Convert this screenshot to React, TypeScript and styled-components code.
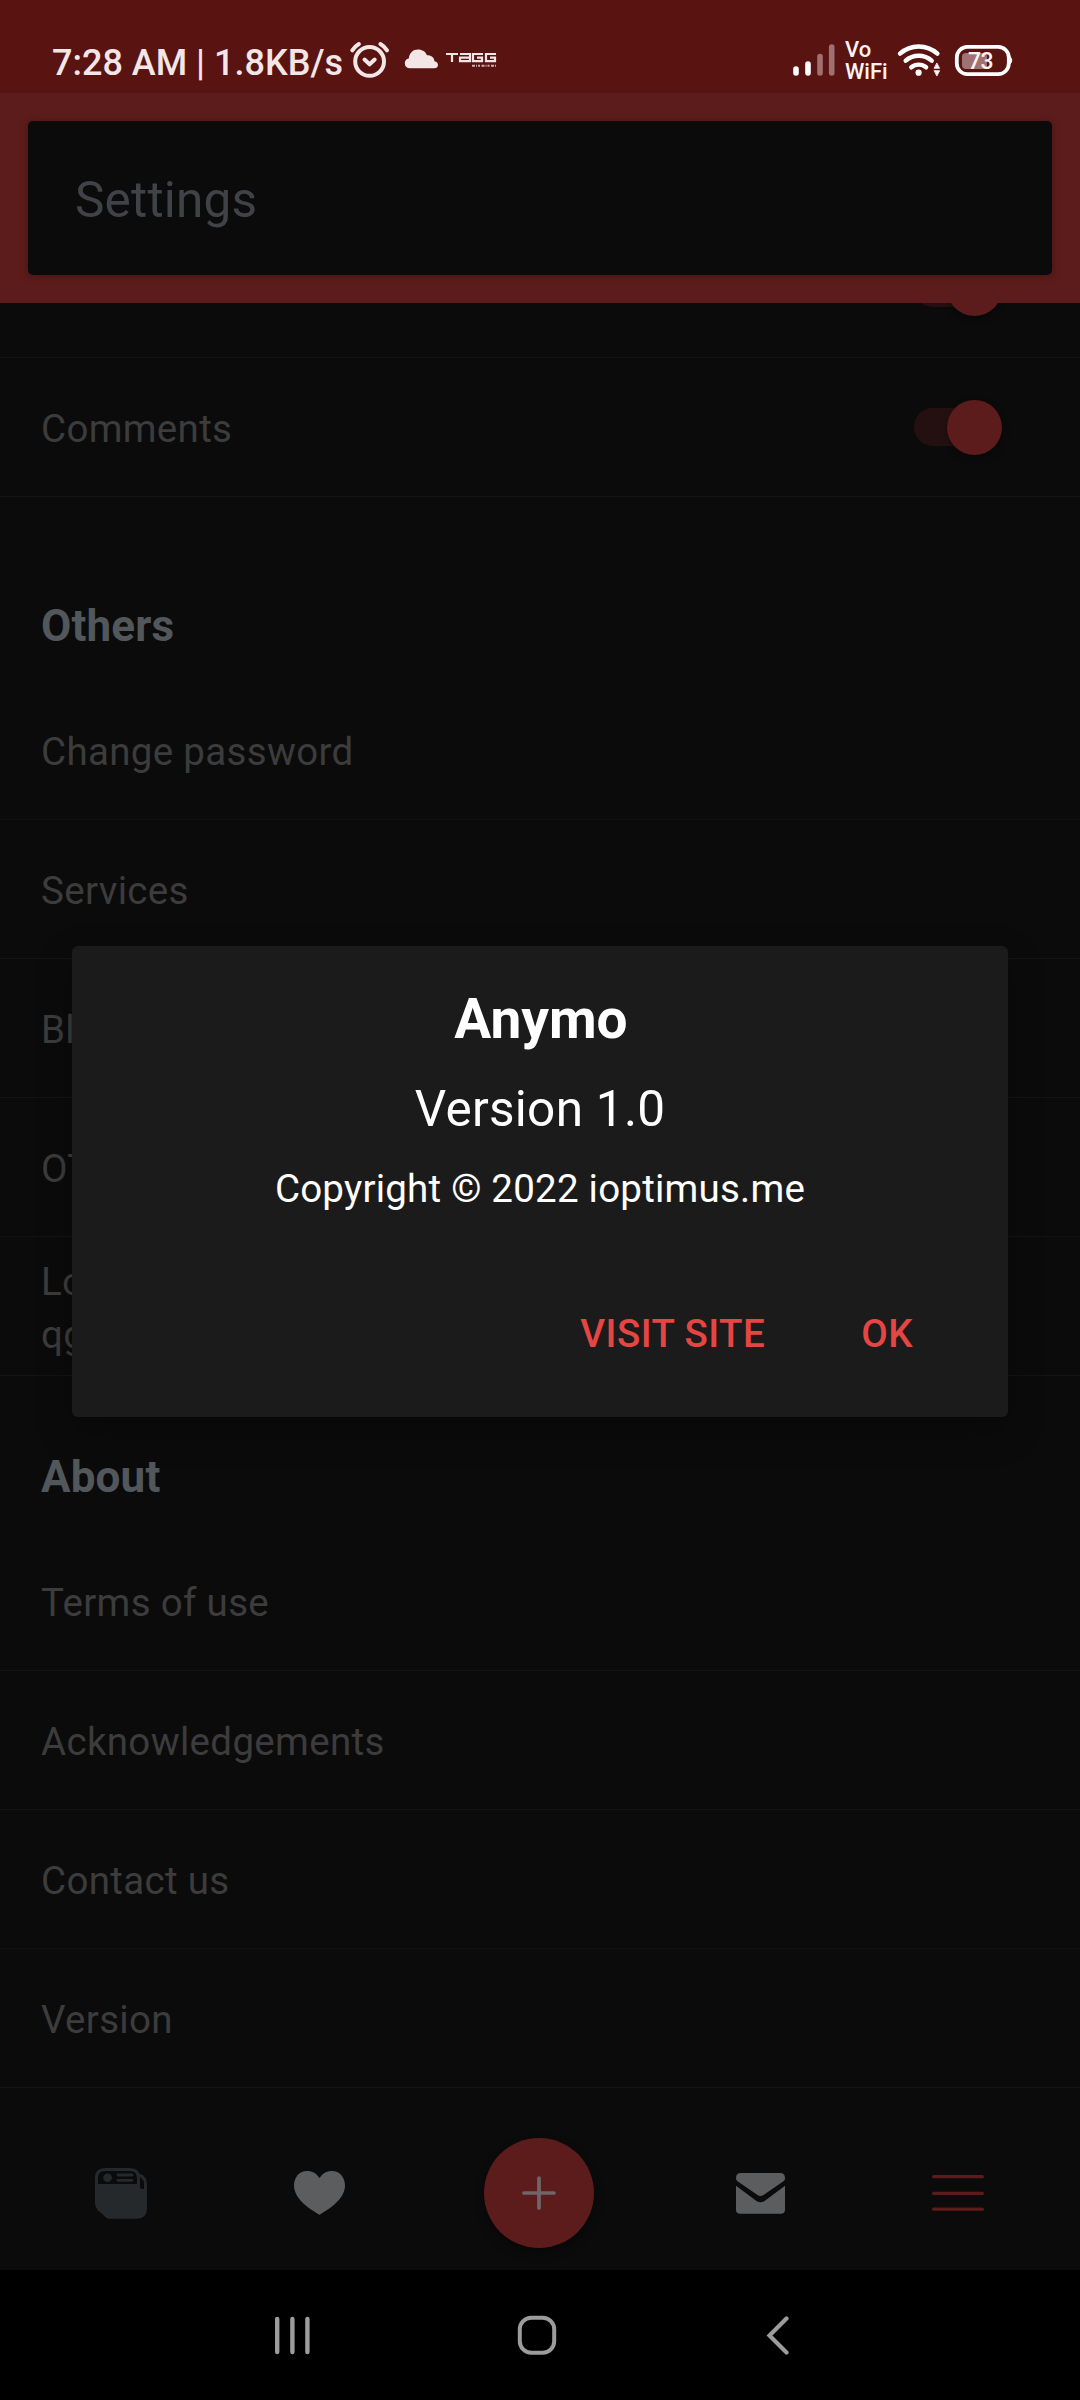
import React from 'react';
import styled, { createGlobalStyle } from 'styled-components';

const GlobalStyle = createGlobalStyle`
  *, *::before, *::after { box-sizing: border-box; }
  body { margin: 0; background: #000; }
  button { font: inherit; border: 0; padding: 0; background: none; }
  svg { display: block; flex-shrink: 0; }
`;

const Screen = styled.div`
  position: relative;
  display: flex;
  flex-direction: column;
  width: 1080px;
  height: 2400px;
  overflow: hidden;
  background: #0b0b0b;
  font-family: Roboto, 'Liberation Sans', sans-serif;
`;

const StatusBar = styled.header`
  display: flex;
  align-items: flex-start;
  justify-content: space-between;
  height: 93px;
  padding: 40px 66px 0 52px;
  background: #591311;
  color: #f2e6e6;
`;

const StatusGroup = styled.div`
  display: flex;
  align-items: flex-start;
`;

const Clock = styled.span`
  width: 297px;
  padding-top: 2px;
  font-size: 36px;
  font-weight: 500;
  line-height: 42px;
  white-space: nowrap;
`;

const AppBar = styled.div`
  height: 210px;
  flex-shrink: 0;
  padding: 28px;
  background: #5c1c1b;
`;

const TitleCard = styled.div`
  display: flex;
  align-items: center;
  height: 154px;
  padding: 4px 47px 0;
  border-radius: 5px;
  background: #0b0b0b;
  box-shadow: 0 1px 7px rgba(20, 8, 8, 0.35);
  color: #3f4246;
  font-size: 49.5px;
  letter-spacing: 0.2px;
`;

const List = styled.main`
  display: flex;
  flex: 1;
  flex-direction: column;
  justify-content: flex-end;
  min-height: 0;
  overflow: hidden;
`;

const Row = styled.div`
  display: flex;
  align-items: center;
  justify-content: space-between;
  height: 139px;
  flex-shrink: 0;
  padding: 3px 78px 0 41px;
  border-bottom: 1px solid #131414;
  color: #3c3c3c;
  font-size: 38.5px;
  line-height: 53px;
  letter-spacing: 0.33px;
  white-space: pre-line;
`;

const SectionTitle = styled.h2<{ $gap?: number }>`
  display: flex;
  align-items: flex-end;
  height: 156px;
  flex-shrink: 0;
  margin: ${(p) => p.$gap ?? 0}px 0 0;
  padding: 0 41px 29px;
  color: #52575b;
  font-size: 44px;
  font-weight: 700;
  line-height: 52px;
  letter-spacing: 0.15px;
`;

const Track = styled.span`
  display: flex;
  align-items: center;
  justify-content: flex-end;
  width: 88px;
  height: 38px;
  margin: -3px 0 0 auto;
  border-radius: 19px;
  background: linear-gradient(90deg, #251011 60px, transparent 60px);
`;

const Thumb = styled.span`
  width: 55px;
  height: 55px;
  flex-shrink: 0;
  border-radius: 50%;
  background: #5c1c1b;
  box-shadow: 0 3px 7px rgba(0, 0, 0, 0.4);
`;

const TabBar = styled.nav`
  display: flex;
  align-items: center;
  gap: 147px;
  height: 182px;
  flex-shrink: 0;
  padding: 28px 95px 0;
`;

const AddButton = styled.button`
  display: grid;
  place-items: center;
  width: 110px;
  height: 110px;
  flex-shrink: 0;
  margin: 0 -5px 0 -8px;
  border-radius: 50%;
  background: #5c1c1b;
  box-shadow: 0 5px 10px rgba(0, 0, 0, 0.35);
`;

const SystemNav = styled.footer`
  display: flex;
  align-items: center;
  justify-content: space-between;
  height: 130px;
  flex-shrink: 0;
  padding: 0 290px 1px 274px;
  background: #000;
`;

const HomeSlot = styled.span`
  margin-right: 4px;
`;

const Overlay = styled.div`
  position: absolute;
  inset: 93px 0 130px;
  display: flex;
  align-items: center;
  justify-content: center;
`;

const Dialog = styled.section`
  display: flex;
  flex-direction: column;
  width: 936px;
  height: 471px;
  padding: 41px 95px 0;
  border-radius: 6px;
  background: #1b1b1b;
  box-shadow: 0 14px 36px rgba(0, 0, 0, 0.28);
  color: #fff;
  text-align: center;
`;

const DialogTitle = styled.h1`
  margin: 0;
  padding-left: 2px;
  font-size: 55px;
  font-weight: 700;
  line-height: 64px;
`;

const DialogVersion = styled.p`
  margin: 29px 0 0;
  font-size: 49.5px;
  line-height: 58px;
  letter-spacing: 0.28px;
`;

const DialogNote = styled.p`
  margin: 28px 0 0;
  font-size: 38.5px;
  line-height: 46px;
  letter-spacing: 0.22px;
`;

const DialogActions = styled.div`
  display: flex;
  justify-content: flex-end;
  gap: 96px;
  margin-top: 99px;
`;

const ActionButton = styled.button`
  color: #e54643;
  font-size: 38.5px;
  font-weight: 500;
  line-height: 46px;
  letter-spacing: 0.45px;
`;

const AlarmIcon = () => (
  <svg width="42" height="40" viewBox="349 40 42 40" fill="none" stroke="#f2e6e6" strokeWidth="4" strokeLinecap="round" strokeLinejoin="round">
    <circle cx="369.6" cy="61.4" r="14.4" />
    <path d="M364.5 59.5l5.1 4.8 5.1-4.8M352.3 50.3q2.5-3.8 6.6-6.2M387 50.3q-2.5-3.8-6.6-6.2" />
  </svg>
);

const CloudIcon = () => (
  <svg width="54" height="40" viewBox="391 40 54 40" fill="#f2e6e6">
    <path d="M409.3 68.2a4.9 4.9 0 0 1-.5-9.7C409.3 53 413 49.6 418 49.6c4.300 0 7.600 2.200 8.900 5.700 4.500-.2 7.300 2.300 7.600 5.900 2.200.5 3.500 1.900 3.500 3.700 0 2-1.500 3.300-3.700 3.300z" />
  </svg>
);

const TaggLogo = () => (
  <svg width="54" height="40" viewBox="445 40 54 40" fill="none" stroke="#f2e6e6">
    <g strokeWidth="2.2">
      <path d="M446 54h12M452 54v8" />
      <path d="M460 54h10v7.200h-10v-3.600h9" />
      <path d="M483 54h-10v7.200h9v-3.600h-5" />
      <path d="M496 54h-10v7.200h9v-3.600h-5" />
    </g>
    <path d="M472 65.800h24" strokeWidth="2" strokeDasharray="3 1 1 1 2 1.500" opacity="0.75" />
  </svg>
);

const SignalIcon = () => (
  <svg width="50" height="40" viewBox="792 40 50 40" stroke="#fff" strokeWidth="5.6" strokeLinecap="round">
    <path d="M796 69v4M808 64v9" />
    <path d="M820 56.500v16.500M831.700 47v26" stroke="#9f7171" />
  </svg>
);

const VoWifi = styled.span`
  display: flex;
  flex-direction: column;
  width: 54px;
  margin-top: -1px;
  padding-left: 3px;
  font-size: 22px;
  font-weight: 500;
  line-height: 22px;
  color: #fbf3f3;
`;

const WifiIcon = () => (
  <svg width="57" height="40" viewBox="896 40 57 40" fill="none" stroke="#fff" strokeWidth="4.4" strokeLinecap="round">
    <path d="M900 53.600a28 28 0 0 1 37.400 0M905.700 60.700a19.500 19.500 0 0 1 26 0M911.300 67.300a11.500 11.500 0 0 1 14.800 0" />
    <circle cx="918.600" cy="72.700" r="3.100" fill="#fff" stroke="none" />
    <path d="M937 63.300l2.600 5h-5.200zM937 75.700l2.600-5h-5.200z" fill="#fff" strokeWidth=".8" strokeLinejoin="round" />
  </svg>
);

const BatteryIcon = () => (
  <svg width="61" height="40" viewBox="953 40 61 40">
    <rect x="962" y="53" width="25" height="16" rx="4" fill="#9f7171" />
    <rect x="956.800" y="46.900" width="52" height="27.200" rx="10.500" fill="none" stroke="#fff" strokeWidth="3.800" />
    <path d="M1010 56.500q3.500 3.800 0 7.600z" fill="#fff" stroke="#fff" />
    <text x="980.500" y="69" textAnchor="middle" fontSize="23" fontWeight="500" letterSpacing="-.6" fill="#fbf3f3">73</text>
  </svg>
);

const FeedIcon = () => (
  <svg width="52" height="52" viewBox="95 2167 52 52" fill="none" stroke="#26292c" strokeWidth="3">
    <path d="M95 2184H138L141 2189H147V2208Q147 2218.700 137 2218.700H110Q106 2218.700 103 2214.500L98 2210.500Q95 2207 95 2203Z" fill="#26292c" stroke="none" />
    <path d="M96.500 2186v-8q0-8.500 8.500-8.500h25q8.500 0 8.500 8.500v10" />
    <path d="M139 2175q6.500 2.500 6.500 9v14" />
    <path d="M142.500 2182v7" stroke="#0b0b0b" strokeWidth="2" />
    <circle cx="107.600" cy="2177.700" r="4.300" fill="#26292c" stroke="none" />
    <path d="M118 2175h14M118 2180.300h14" strokeWidth="2.800" strokeLinecap="round" />
  </svg>
);

const HeartIcon = () => (
  <svg width="51" height="44" viewBox="0 0 51 44" fill="#5c5d5f">
    <path d="M25.500 43.700C19 40 0 29 0 14.500 0 6 5.500 0 13 0c5.500 0 9.500 2.500 12.500 7C28.500 2.500 32.500 0 38 0c7.500 0 13 6 13 14.500C51 29 32 40 25.500 43.700z" />
  </svg>
);

const PlusIcon = () => (
  <svg width="34" height="34" viewBox="0 0 34 34" stroke="#706668" strokeWidth="3.700" strokeLinecap="round">
    <path d="M17 2v30M2 17h30" />
  </svg>
);

const MailIcon = () => (
  <svg width="49" height="41" viewBox="0 0 49 41" fill="#5c5d5f">
    <path d="M5 0h39q5 0 5 5c0 1.500-.5 2.500-1.500 3.200L27.500 22q-3 2.200-6 0L1.500 8.200C.5 7.500 0 6.500 0 5q0-5 5-5z" />
    <path d="M0 12.700L20.500 28q4 2.700 8 0L49 12.700V36.500q0 4.300-4.300 4.300H4.300Q0 40.800 0 36.500z" />
  </svg>
);

const MenuIcon = () => (
  <svg width="52" height="36" viewBox="0 0 52 36" stroke="#5c1c1b" strokeWidth="3.200" strokeLinecap="round">
    <path d="M1.600 1.700h48.800M1.600 18.400h48.800M1.600 34.200h48.800" />
  </svg>
);

const RecentsIcon = () => (
  <svg width="38" height="40" viewBox="274 2315 38 40" stroke="#9d9b9b" strokeWidth="4.400" strokeLinecap="round">
    <path d="M277.200 2319v33M292.400 2319v33M307.400 2319v33" />
  </svg>
);

const HomeIcon = () => (
  <svg width="40" height="40" viewBox="0 0 40 40" fill="none" stroke="#9d9b9b" strokeWidth="4">
    <rect x="2.800" y="2.800" width="34.400" height="35" rx="11.500" />
  </svg>
);

const BackIcon = () => (
  <svg width="24" height="40" viewBox="0 0 24 40" fill="none" stroke="#9d9b9b" strokeWidth="4.200" strokeLinecap="round">
    <path d="M20.500 3.500L3.500 20.500l17 17" />
  </svg>
);

const Switch = () => (
  <Track role="switch" aria-checked="true">
    <Thumb />
  </Track>
);

const otherRows = ['Change password', 'Services', 'Bl', 'OT', 'Lo\nqg'];
const aboutRows = ['Terms of use', 'Acknowledgements', 'Contact us', 'Version'];

export default function App() {
  return (
    <>
      <GlobalStyle />
      <Screen>
        <StatusBar>
          <StatusGroup>
            <Clock>7:28 AM | 1.8KB/s</Clock>
            <AlarmIcon />
            <CloudIcon />
            <TaggLogo />
          </StatusGroup>
          <StatusGroup>
            <SignalIcon />
            <VoWifi>
              <span>Vo</span>
              <span>WiFi</span>
            </VoWifi>
            <WifiIcon />
            <BatteryIcon />
          </StatusGroup>
        </StatusBar>
        <AppBar>
          <TitleCard>Settings</TitleCard>
        </AppBar>
        <List>
          <Row>
            <Switch />
          </Row>
          <Row>
            Comments
            <Switch />
          </Row>
          <SectionTitle $gap={28}>Others</SectionTitle>
          {otherRows.map((label) => (
            <Row key={label}>{label}</Row>
          ))}
          <SectionTitle>About</SectionTitle>
          {aboutRows.map((label) => (
            <Row key={label}>{label}</Row>
          ))}
        </List>
        <TabBar>
          <FeedIcon />
          <HeartIcon />
          <AddButton aria-label="Add">
            <PlusIcon />
          </AddButton>
          <MailIcon />
          <MenuIcon />
        </TabBar>
        <SystemNav>
          <RecentsIcon />
          <HomeSlot>
            <HomeIcon />
          </HomeSlot>
          <BackIcon />
        </SystemNav>
        <Overlay>
          <Dialog role="dialog">
            <DialogTitle>Anymo</DialogTitle>
            <DialogVersion>Version 1.0</DialogVersion>
            <DialogNote>Copyright © 2022 ioptimus.me</DialogNote>
            <DialogActions>
              <ActionButton>VISIT SITE</ActionButton>
              <ActionButton>OK</ActionButton>
            </DialogActions>
          </Dialog>
        </Overlay>
      </Screen>
    </>
  );
}
